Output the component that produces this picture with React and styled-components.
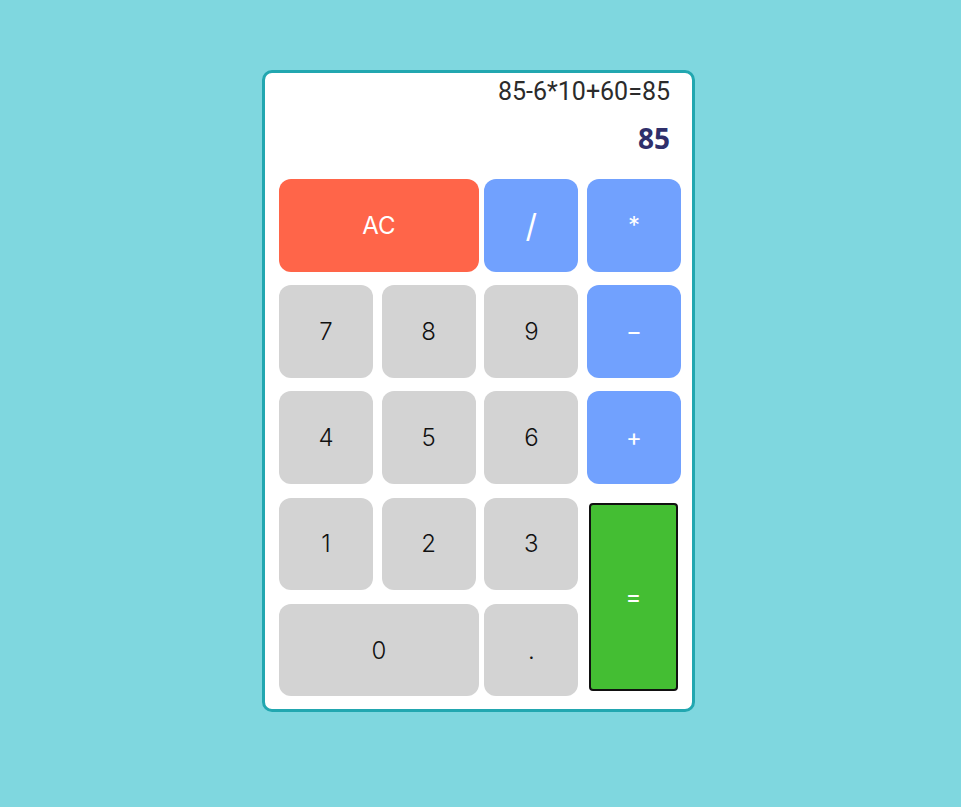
import React from 'react';
import styled, { createGlobalStyle } from 'styled-components';

const Global = createGlobalStyle`
    html, body {
        margin: 0;
        padding: 0;
        background: #7fd7df;
    }
    body {
        font-family: "Inter", "Liberation Sans", sans-serif;
    }
`;

const Page = styled.div`
    min-height: 807px;
    display: flex;
    justify-content: flex-start;
    align-items: flex-start;
    padding: 70px 0 0 262px;
    box-sizing: border-box;
`;

const Card = styled.div`
    width: 433px;
    box-sizing: border-box;
    background: #fff;
    border: 3px solid #22a7b0;
    border-radius: 10px;
    padding: 3px 11px 13px 14px;
`;

const Display = styled.div`
    display: flex;
    flex-direction: column;
    align-items: flex-end;
    padding-right: 11px;
    height: 103px;
`;

const Expression = styled.div`
    font-family: Roboto, "Liberation Sans", sans-serif;
    font-size: 25px;
    color: #2b2b2b;
    line-height: 32px;
`;

const Result = styled.div`
    margin-top: 13px;
    font-family: "Open Sans", "Noto Sans", sans-serif;
    font-weight: 700;
    font-size: 28px;
    color: #2f2f6b;
    line-height: 34px;
`;

const Keys = styled.div`
    display: grid;
    grid-template-columns: repeat(4, 94px);
    grid-auto-rows: 92.5px;
    column-gap: 8.7px;
    row-gap: 13.7px;
`;

const tones = {
    num: { bg: '#d3d3d3', fg: '#111', weight: 300 },
    op: { bg: '#71a1fe', fg: '#fff', weight: 400 },
    clear: { bg: '#ff6549', fg: '#fff', weight: 400 },
    equal: { bg: '#44be33', fg: '#fff', weight: 400 },
};

const Key = styled.button`
    font-family: "Inter", "Lato", sans-serif;
    font-size: 24px;
    font-weight: ${(p) => tones[p.$tone].weight};
    border: none;
    border-radius: 12px;
    background: ${(p) => tones[p.$tone].bg};
    color: ${(p) => tones[p.$tone].fg};
    grid-column: span ${(p) => p.$cols || 1};
    grid-row: span ${(p) => p.$rows || 1};
    width: ${(p) => (p.$cols === 2 ? '200px' : 'auto')};
    padding: 0;
    cursor: pointer;
`;

const EqualKey = styled(Key)`
    margin: 5px 3px 5px 2px;
    border: 2px solid #111;
    border-radius: 4px;
`;

const App = () => (
    <>
        <Global />
        <Page>
            <Card>
                <Display>
                    <Expression>85-6*10+60=85</Expression>
                    <Result>85</Result>
                </Display>
                <Keys>
                    <Key $tone="clear" $cols={2}>AC</Key>
                    <Key $tone="op" style={{ fontSize: 32 }}>/</Key>
                    <Key $tone="op">*</Key>
                    <Key $tone="num">7</Key>
                    <Key $tone="num">8</Key>
                    <Key $tone="num">9</Key>
                    <Key $tone="op">−</Key>
                    <Key $tone="num">4</Key>
                    <Key $tone="num">5</Key>
                    <Key $tone="num">6</Key>
                    <Key $tone="op">+</Key>
                    <Key $tone="num">1</Key>
                    <Key $tone="num">2</Key>
                    <Key $tone="num">3</Key>
                    <EqualKey $tone="equal" $rows={2}>=</EqualKey>
                    <Key $tone="num" $cols={2}>0</Key>
                    <Key $tone="num">.</Key>
                </Keys>
            </Card>
        </Page>
    </>
);

export default App;
